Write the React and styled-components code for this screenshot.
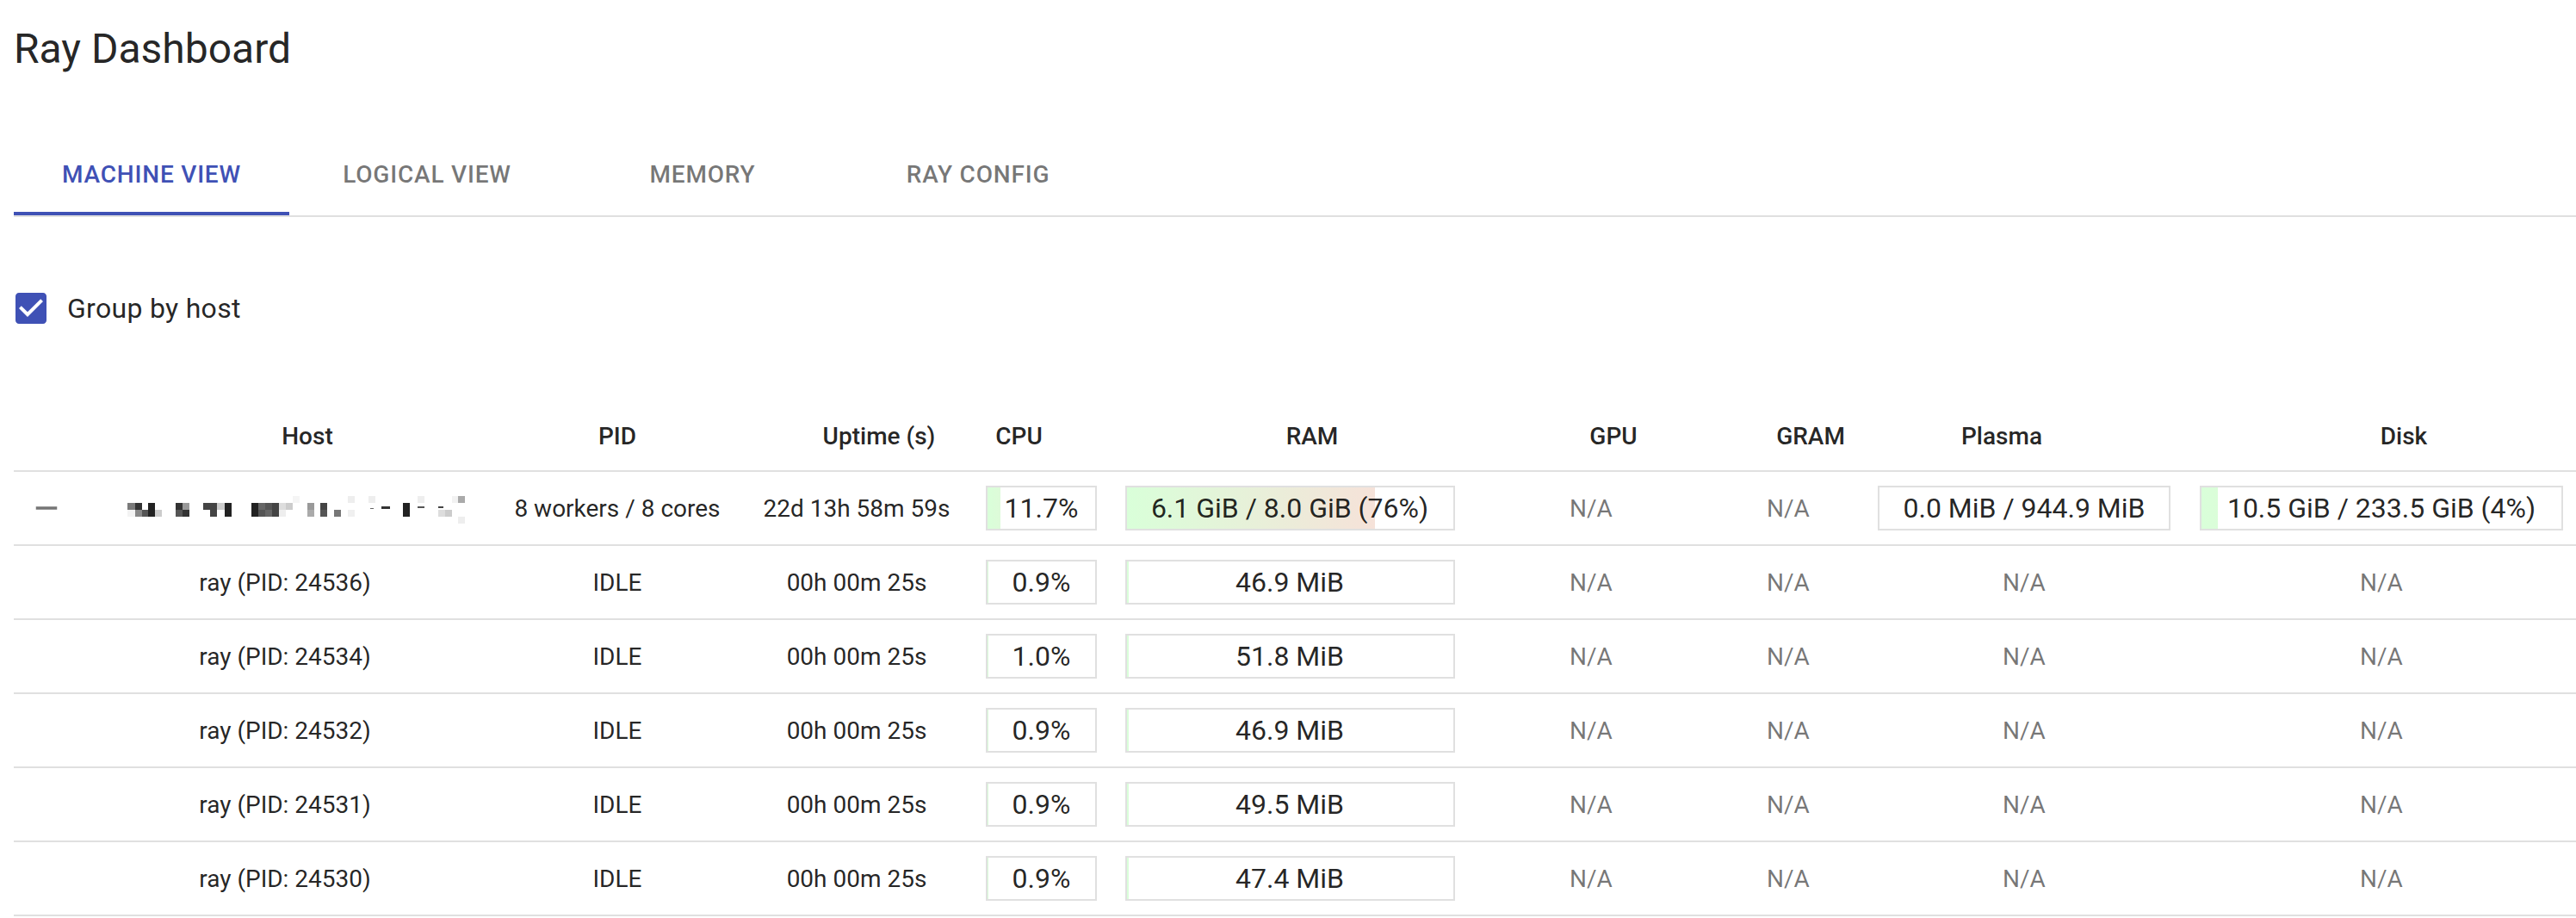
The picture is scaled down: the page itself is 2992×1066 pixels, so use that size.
import React from "react";
import styled, { createGlobalStyle } from "styled-components";

const COLS = "76px 478px 294px 262px 167px 410px 290px 168px 380px 450px";

const GlobalStyle = createGlobalStyle`
  html, body {
    margin: 0;
    padding: 0;
    background: #fff;
    overflow: hidden;
  }
  body {
    font-family: Roboto, "Helvetica Neue", Arial, sans-serif;
    color: rgba(0, 0, 0, 0.87);
  }
`;

const Page = styled.div`
  padding-left: 16px;
  width: 2976px;
`;

const Title = styled.h1`
  margin: 0;
  padding-top: 25px;
  font-size: 48px;
  line-height: 64px;
  font-weight: 400;
`;

const TabBar = styled.div`
  display: flex;
  margin-top: 65px;
  border-bottom: 2px solid #e0e0e0;
`;

const Tab = styled.div`
  display: flex;
  align-items: center;
  justify-content: center;
  box-sizing: border-box;
  width: 320px;
  height: 96px;
  padding-top: 4px;
  border-bottom: 4px solid ${({ $active }) => ($active ? "#3f51b5" : "transparent")};
  font-size: 28px;
  font-weight: 500;
  letter-spacing: 0.8px;
  text-transform: uppercase;
  color: ${({ $active }) => ($active ? "#3f51b5" : "rgba(0, 0, 0, 0.54)")};
  cursor: pointer;
`;

const GroupRow = styled.label`
  display: flex;
  align-items: center;
  height: 84px;
  margin-top: 64px;
`;

const CheckIcon = styled.svg`
  width: 48px;
  height: 48px;
  margin-left: -4px;
  flex: none;
`;

const GroupLabel = styled.span`
  margin-left: 18px;
  font-size: 32px;
  line-height: 48px;
  letter-spacing: 0.3px;
`;

const Table = styled.div`
  margin-top: 66px;
`;

const HeadRow = styled.div`
  display: grid;
  grid-template-columns: ${COLS};
  box-sizing: border-box;
  height: 82px;
  border-bottom: 2px solid #e0e0e0;
`;

const BodyRow = styled(HeadRow)`
  height: 86px;
`;

const Cell = styled.div`
  display: flex;
  align-items: center;
  justify-content: center;
  font-size: 28px;
  font-weight: ${({ $head }) => ($head ? 500 : 400)};
  color: ${({ $muted }) => ($muted ? "rgba(0, 0, 0, 0.54)" : "rgba(0, 0, 0, 0.87)")};
  white-space: nowrap;
`;

const SortArrow = styled.svg`
  width: 36px;
  height: 36px;
  margin: 0 8px;
  opacity: 0;
  flex: none;
`;

const Bar = styled.div`
  display: flex;
  align-items: center;
  justify-content: center;
  box-sizing: border-box;
  width: ${({ $w }) => $w}px;
  height: 52px;
  border: 2px solid #e0e0e0;
  font-size: 32px;
  color: rgba(0, 0, 0, 0.87);
`;

const Collapse = styled.svg`
  width: 42px;
  height: 42px;
  fill: #757575;
`;

const BlurredHost = styled.svg`
  width: 420px;
  height: 40px;
`;

const HOST_BLOCKS = [
  [148, 584, 9, 8, "#7a7a7a"], [157, 584, 8, 8, "#333"], [172, 584, 8, 8, "#222"],
  [204, 584, 8, 8, "#333"], [212, 584, 8, 8, "#999"],
  [236, 584, 8, 8, "#444"], [244, 584, 8, 8, "#444"], [252, 584, 9, 8, "#ccc"], [261, 584, 8, 8, "#222"],
  [292, 584, 8, 8, "#222"], [300, 584, 8, 8, "#666"], [308, 584, 8, 8, "#555"], [316, 584, 8, 8, "#444"],
  [324, 584, 8, 8, "#ddd"], [332, 584, 8, 8, "#ccc"],
  [357, 584, 8, 8, "#999"], [372, 584, 8, 8, "#444"], [468, 584, 8, 8, "#222"],
  [148, 592, 9, 8, "#f3f3f3"], [157, 592, 8, 8, "#888"], [165, 592, 7, 8, "#555"], [172, 592, 8, 8, "#222"],
  [180, 592, 8, 8, "#ccc"], [204, 592, 8, 8, "#555"], [212, 592, 8, 8, "#333"],
  [244, 592, 8, 8, "#444"], [261, 592, 8, 8, "#222"],
  [292, 592, 8, 8, "#222"], [300, 592, 8, 8, "#555"], [308, 592, 8, 8, "#666"], [316, 592, 8, 8, "#444"],
  [324, 592, 8, 8, "#eee"], [357, 592, 8, 8, "#aaa"], [372, 592, 8, 8, "#555"], [388, 592, 8, 8, "#777"],
  [404, 592, 8, 8, "#f0f0f0"], [468, 592, 8, 8, "#222"], [509, 592, 8, 8, "#ddd"], [517, 592, 8, 8, "#ccc"],
  [340, 576, 8, 8, "#f5f5f5"], [404, 576, 8, 8, "#eee"], [428, 576, 8, 8, "#eee"], [485, 576, 8, 8, "#eee"],
  [525, 576, 8, 8, "#f2f2f2"], [532, 576, 8, 8, "#aaa"], [532, 600, 8, 8, "#eee"],
  [443, 588, 10, 3, "#333"], [430, 590, 4, 1, "#666"], [485, 588, 8, 2, "#555"], [509, 588, 6, 2, "#444"],
];

const HEADERS = [
  { label: "", arrow: null },
  { label: "Host", arrow: "before" },
  { label: "PID", arrow: null },
  { label: "Uptime (s)", arrow: "before" },
  { label: "CPU", arrow: "after" },
  { label: "RAM", arrow: "before" },
  { label: "GPU", arrow: "before" },
  { label: "GRAM", arrow: "before" },
  { label: "Plasma", arrow: "after" },
  { label: "Disk", arrow: "before" },
];

const WORKERS = [
  { pid: 24536, cpu: 0.9, ram: "46.9 MiB", ramPct: 0.57 },
  { pid: 24534, cpu: 1.0, ram: "51.8 MiB", ramPct: 0.63 },
  { pid: 24532, cpu: 0.9, ram: "46.9 MiB", ramPct: 0.57 },
  { pid: 24531, cpu: 0.9, ram: "49.5 MiB", ramPct: 0.6 },
  { pid: 24530, cpu: 0.9, ram: "47.4 MiB", ramPct: 0.58 },
];

const usageGradient = (percent) => {
  const p = Math.max(Math.min(percent, 100), 0);
  const a = 0.15;
  const r = Math.round((255 * p) / 100);
  const g = Math.round(255 - (255 * p) / 100);
  return `linear-gradient(to right, rgba(0, 255, 0, ${a}), rgba(${r}, ${g}, 0, ${a}) ${p}%, transparent ${p}%)`;
};

const UsageBar = ({ percent, text, width }) => (
  <Bar $w={width} style={{ background: usageGradient(percent) }}>
    {text}
  </Bar>
);

const Arrow = () => (
  <SortArrow viewBox="0 0 24 24">
    <path d="M20 12l-1.41-1.41L13 16.17V4h-2v12.17l-5.58-5.59L4 12l8 8 8-8z" />
  </SortArrow>
);

const HeadCell = ({ label, arrow }) => (
  <Cell $head>
    {arrow === "before" && <Arrow />}
    {label}
    {arrow === "after" && <Arrow />}
  </Cell>
);

const NA = () => <Cell $muted>N/A</Cell>;

export default function App() {
  return (
    <Page>
      <GlobalStyle />
      <Title>Ray Dashboard</Title>

      <TabBar>
        <Tab $active>Machine view</Tab>
        <Tab>Logical view</Tab>
        <Tab>Memory</Tab>
        <Tab>Ray config</Tab>
      </TabBar>

      <GroupRow>
        <CheckIcon viewBox="0 0 24 24">
          <path
            fill="#3f51b5"
            d="M19 3H5c-1.11 0-2 .9-2 2v14c0 1.1.89 2 2 2h14c1.11 0 2-.9 2-2V5c0-1.1-.89-2-2-2z"
          />
          <path fill="#fff" d="M10 17l-5-5 1.41-1.41L10 14.17l7.59-7.59L19 8l-9 9z" />
        </CheckIcon>
        <GroupLabel>Group by host</GroupLabel>
      </GroupRow>

      <Table>
        <HeadRow>
          {HEADERS.map((h, i) => (
            <HeadCell key={i} label={h.label} arrow={h.arrow} />
          ))}
        </HeadRow>

        <BodyRow>
          <Cell>
            <Collapse viewBox="0 0 24 24">
              <path d="M19 13H5v-2h14v2z" />
            </Collapse>
          </Cell>
          <Cell>
            <BlurredHost viewBox="0 0 420 40">
              {HOST_BLOCKS.map(([x, y, w, h, c], i) => (
                <rect key={i} x={x - 121} y={y - 570} width={w} height={h} fill={c} />
              ))}
            </BlurredHost>
          </Cell>
          <Cell>8 workers / 8 cores</Cell>
          <Cell>22d 13h 58m 59s</Cell>
          <Cell>
            <UsageBar width={129} percent={11.7} text="11.7%" />
          </Cell>
          <Cell>
            <UsageBar width={383} percent={76} text="6.1 GiB / 8.0 GiB (76%)" />
          </Cell>
          <NA />
          <NA />
          <Cell>
            <UsageBar width={340} percent={0} text="0.0 MiB / 944.9 MiB" />
          </Cell>
          <Cell>
            <UsageBar width={422} percent={4.5} text="10.5 GiB / 233.5 GiB (4%)" />
          </Cell>
        </BodyRow>

        {WORKERS.map((w) => (
          <BodyRow key={w.pid}>
            <Cell />
            <Cell>ray (PID: {w.pid})</Cell>
            <Cell>IDLE</Cell>
            <Cell>00h 00m 25s</Cell>
            <Cell>
              <UsageBar width={129} percent={w.cpu} text={`${w.cpu.toFixed(1)}%`} />
            </Cell>
            <Cell>
              <UsageBar width={383} percent={w.ramPct} text={w.ram} />
            </Cell>
            <NA />
            <NA />
            <NA />
            <NA />
          </BodyRow>
        ))}
      </Table>
    </Page>
  );
}
